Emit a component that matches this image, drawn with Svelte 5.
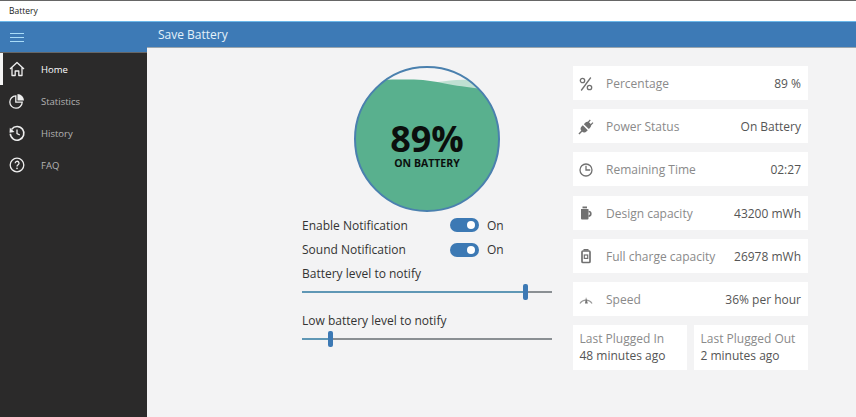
<script>
  const nav = [
    { label: 'Home', icon: 'home', active: true },
    { label: 'Statistics', icon: 'pie' },
    { label: 'History', icon: 'history' },
    { label: 'FAQ', icon: 'faq' }
  ];

  const stats = [
    { label: 'Percentage', value: '89 %', icon: 'percent' },
    { label: 'Power Status', value: 'On Battery', icon: 'plug' },
    { label: 'Remaining Time', value: '02:27', icon: 'clock' },
    { label: 'Design capacity', value: '43200 mWh', icon: 'design' },
    { label: 'Full charge capacity', value: '26978 mWh', icon: 'full' },
    { label: 'Speed', value: '36% per hour', icon: 'speed' }
  ];

  const toggles = ['Enable Notification', 'Sound Notification'];

  const sliders = [
    { label: 'Battery level to notify', pct: 89 },
    { label: 'Low battery level to notify', pct: 11 }
  ];
</script>

{#snippet icon(name)}
  <svg viewBox="0 0 20 20" width="20" height="20" fill="none" stroke="currentColor" stroke-width="1.300">
    {#if name === 'home'}
      <path d="M3 10 10 3.500 17 10M5 8.500V16.500h3.200v-4.500h3.600v4.500H15V8.500" stroke-linejoin="round" />
    {:else if name === 'pie'}
      <path d="M8.800 4.800a6.200 6.200 0 1 0 6.400 6.400H8.800z" />
      <path d="M10.500 3a6.500 6.500 0 0 1 6.500 6.500h-6.500z" fill="currentColor" stroke="none" />
    {:else if name === 'history'}
      <path d="M4.700 6.200a6.800 6.800 0 1 1-1.400 4.600" stroke-width="1.600" />
      <path d="M2.800 4.800 7.500 9l-5 .8z" fill="currentColor" stroke="none" />
      <path d="M10 6.500v4l2.800 1.500" />
    {:else if name === 'faq'}
      <circle cx="10" cy="10" r="6.800" />
      <path d="M8.200 8.300a1.900 1.900 0 1 1 2.900 1.500c-.7.500-1.100.8-1.100 1.600" />
      <circle cx="10" cy="13.400" r=".8" fill="currentColor" stroke="none" />
    {:else if name === 'percent'}
      <circle cx="6.500" cy="6.500" r="2.200" />
      <circle cx="13.500" cy="13.500" r="2.200" />
      <path d="M14.800 3.500 5.200 16.500" />
    {:else if name === 'plug'}
      <g transform="rotate(45 10 10)" fill="currentColor" stroke="none">
        <path d="M6.500 11h7v1.500a3.500 3.500 0 0 1-7 0z" />
        <path d="M9.300 15h1.400v5H9.300z" />
        <path d="M6.500 9.500h7V8a3.500 3.500 0 0 0-7 0z" />
        <path d="M7.500 2h1.200v4H7.500zM11.300 2h1.200v4h-1.200z" />
      </g>
    {:else if name === 'clock'}
      <circle cx="10" cy="10" r="6" />
      <path d="M10 5.800V10h4.200" />
    {:else if name === 'design'}
      <path d="M5 6h7.500v9.500a1 1 0 0 1-1 1H6a1 1 0 0 1-1-1z" fill="currentColor" stroke="none" />
      <path d="M6.500 3.500h4.500V5.300H6.500z" fill="currentColor" stroke="none" />
      <path d="M12.500 8.500a2.300 2.300 0 0 1 0 4.600" stroke-width="1.700" />
    {:else if name === 'full'}
      <rect x="6" y="5" width="8" height="11.500" rx="1" stroke-width="1.700" />
      <path d="M7.500 3h5v1.500h-5z" fill="currentColor" stroke="none" />
      <rect x="8.300" y="9" width="3.400" height="3.400" stroke-width="1.200" />
    {:else if name === 'speed'}
      <path d="M4 14.500a7 7 0 0 1 12 0" stroke="#999" />
      <path d="M9 14.500 10 8l1.800 6.500z" fill="currentColor" stroke="none" />
    {/if}
  </svg>
{/snippet}

<div class="window">
  <div class="titlebar">Battery</div>

  <div class="shell">
    <aside class="sidebar">
      <div class="burger">
        <span></span><span></span><span></span>
      </div>
      <nav>
        {#each nav as item}
          <div class="nav-item" class:active={item.active}>
            <span class="nav-icon">{@render icon(item.icon)}</span>
            <span>{item.label}</span>
          </div>
        {/each}
      </nav>
    </aside>

    <div class="page">
      <header>Save Battery</header>

      <main>
        <section class="controls">
          <div class="gauge">
            <svg viewBox="0 0 148 148" width="148" height="148">
              <defs>
                <clipPath id="gauge-clip"><circle cx="74" cy="74" r="72" /></clipPath>
              </defs>
              <circle cx="74" cy="74" r="72" fill="#f4f4f5" />
              <g clip-path="url(#gauge-clip)">
                <path d="M85 17 C95 16 105 14 115 15 C122 16 128 20 135 26 V34 H85 Z" fill="#bfe0d2" />
                <path d="M0 16 C25 15 50 14 70 15 C90 17 105 23 148 25 V148 H0 Z" fill="#59b08e" />
              </g>
              <circle cx="74" cy="74" r="72" fill="none" stroke="#4a80ae" stroke-width="2" />
            </svg>
            <div class="gauge-text">
              <strong>89%</strong>
              <span>ON BATTERY</span>
            </div>
          </div>

          <div class="toggles">
            {#each toggles as label}
              <div class="toggle-row">
                <span class="toggle-label">{label}</span>
                <span class="switch"><i></i></span>
                <span>On</span>
              </div>
            {/each}
          </div>

          {#each sliders as s}
            <div class="slider">
              <div class="slider-label">{s.label}</div>
              <div class="track">
                <div class="fill" style="width: {s.pct}%"></div>
                <div class="thumb" style="left: {s.pct}%"></div>
              </div>
            </div>
          {/each}
        </section>

        <section class="stats">
          {#each stats as row}
            <div class="card">
              <span class="card-icon">{@render icon(row.icon)}</span>
              <span class="card-label">{row.label}</span>
              <span class="card-value">{row.value}</span>
            </div>
          {/each}
          <div class="plugged">
            <div class="mini">
              <div class="card-label">Last Plugged In</div>
              <div class="mini-value">48 minutes ago</div>
            </div>
            <div class="mini">
              <div class="card-label">Last Plugged Out</div>
              <div class="mini-value">2 minutes ago</div>
            </div>
          </div>
        </section>
      </main>
    </div>
  </div>
</div>

<style>
  :global(body) {
    margin: 0;
    background: #f3f3f4;
  }

  .window {
    width: 856px;
    height: 417px;
    overflow: hidden;
    display: flex;
    flex-direction: column;
    font-family: "Open Sans", "Noto Sans", sans-serif;
    color: #333;
  }

  .titlebar {
    height: 22px;
    flex: none;
    box-sizing: border-box;
    border-top: 1px solid #666;
    border-bottom: 1px solid #6cb8ea;
    background: #fff;
    padding: 3px 0 0 9px;
    font-size: 8.500px;
    line-height: 13px;
    color: #222;
  }

  .shell {
    flex: 1;
    display: flex;
    min-height: 0;
  }

  .sidebar {
    width: 147px;
    flex: none;
    display: flex;
    flex-direction: column;
    background: #2b2a2a;
  }

  .burger {
    height: 31px;
    box-sizing: border-box;
    background: #3d7ab6;
    border-bottom: 1px solid #666;
    padding: 11px 0 0 10px;
    display: flex;
    flex-direction: column;
    gap: 3px;
  }

  .burger span {
    width: 14px;
    height: 1px;
    background: #a9dcf8;
  }

  .nav-item {
    height: 32px;
    display: flex;
    align-items: center;
    box-sizing: border-box;
    padding-left: 7px;
    font-size: 9.500px;
    color: #b4b4b4;
  }

  .nav-item.active {
    color: #fff;
    box-shadow: inset 3px 0 0 #f4f4f4;
  }

  .nav-icon {
    width: 34px;
    display: flex;
    color: #eee;
  }

  .page {
    flex: 1;
    min-width: 0;
    display: flex;
    flex-direction: column;
  }

  header {
    height: 25px;
    flex: none;
    background: #3d7ab6;
    color: #e4f1fa;
    padding-left: 11px;
    font-size: 12px;
    line-height: 26px;
    border-bottom: 1px solid #9aa5ad;
  }

  main {
    flex: 1;
    display: flex;
    align-items: flex-start;
    gap: 21px;
    padding: 18px 0 0 155px;
    background: #f3f3f4;
  }

  .controls {
    width: 250px;
    flex: none;
  }

  .gauge {
    position: relative;
    width: 148px;
    height: 148px;
    margin: -1px 0 0 51px;
  }

  .gauge svg {
    display: block;
  }

  .gauge-text {
    position: absolute;
    inset: 0;
    display: flex;
    flex-direction: column;
    align-items: center;
    justify-content: center;
    color: #0b0f0d;
    padding-top: 12px;
    box-sizing: border-box;
  }

  .gauge-text strong {
    font-size: 36px;
    line-height: 36px;
    font-weight: 700;
  }

  .gauge-text span {
    font-size: 10.500px;
    line-height: 12px;
    font-weight: 700;
  }

  .toggles {
    margin: 0 0 3px;
  }

  .toggle-row {
    height: 24.500px;
    display: flex;
    align-items: center;
    font-size: 12px;
    color: #333;
  }

  .toggle-label {
    width: 148px;
  }

  .switch {
    width: 29px;
    height: 14px;
    border-radius: 7px;
    background: #3c79b4;
    margin-right: 8px;
    position: relative;
  }

  .switch i {
    position: absolute;
    right: 4px;
    top: 3px;
    width: 8px;
    height: 8px;
    border-radius: 50%;
    background: #fff;
  }

  .slider {
    height: 47px;
  }

  .slider-label {
    font-size: 12px;
    line-height: 17px;
    color: #333;
    margin-bottom: 9px;
  }

  .track {
    position: relative;
    height: 1.500px;
    background: #8a8f93;
  }

  .fill {
    height: 100%;
    background: #5f97b5;
  }

  .thumb {
    position: absolute;
    top: -7px;
    width: 5px;
    height: 16px;
    margin-left: -2px;
    border-radius: 2px;
    background: #3c79b4;
  }

  .stats {
    width: 235px;
    flex: none;
    display: flex;
    flex-direction: column;
    gap: 9.200px;
  }

  .card {
    height: 34px;
    display: flex;
    align-items: center;
    box-sizing: border-box;
    background: #fff;
    padding: 1px 7px 0 3px;
    font-size: 12px;
  }

  .card-icon {
    width: 30px;
    display: flex;
    color: #717171;
  }

  .card-label {
    color: #8a8a8a;
  }

  .card-value {
    margin-left: auto;
    color: #555;
  }

  .plugged {
    display: flex;
    gap: 7px;
  }

  .mini {
    flex: 1;
    height: 45px;
    box-sizing: border-box;
    background: #fff;
    padding: 5px 0 0 6.500px;
    font-size: 12px;
    line-height: 17px;
  }

  .mini-value {
    color: #555;
  }
</style>
